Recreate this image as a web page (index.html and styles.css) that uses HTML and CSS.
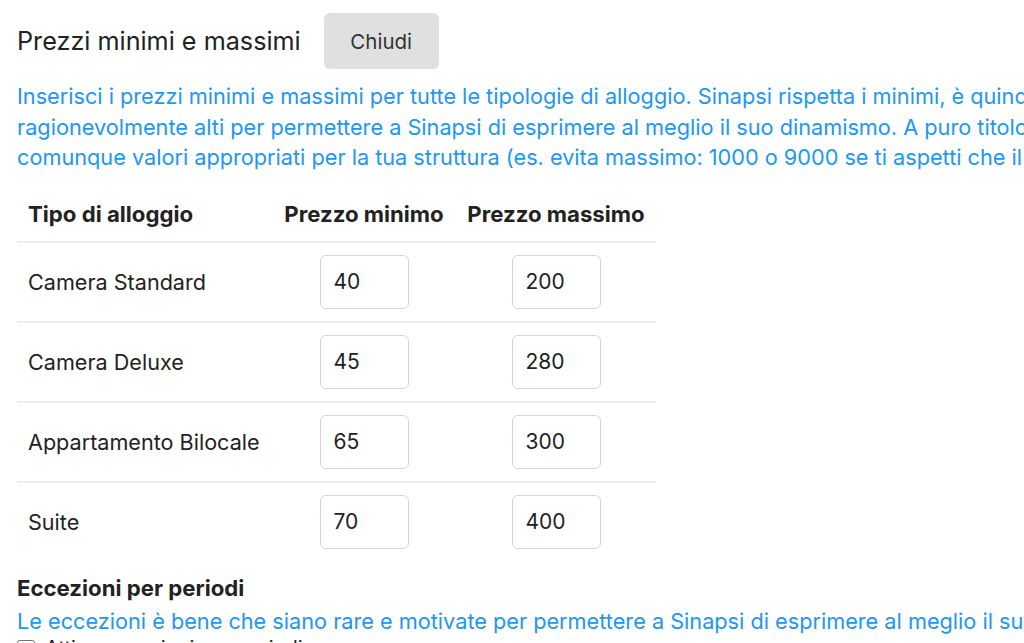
FILE: index.html
```html
<!DOCTYPE html>
<html lang="it">
<head>
<meta charset="utf-8">
<title>Prezzi minimi e massimi</title>
<link rel="stylesheet" href="styles.css">
</head>
<body>
<div class="page">
  <div class="header">
    <h2 class="title">Prezzi minimi e massimi</h2>
    <button class="btn" type="button">Chiudi</button>
  </div>
  <p class="info">Inserisci i prezzi minimi e massimi per tutte le tipologie di alloggio. Sinapsi rispetta i minimi, è quindi importante che siano<br>ragionevolmente alti per permettere a Sinapsi di esprimere al meglio il suo dinamismo. A puro titolo indicativo, inserisci<br>comunque valori appropriati per la tua struttura (es. evita massimo: 1000 o 9000 se ti aspetti che il prezzo non superi mai 400).</p>
  <table class="prices">
    <thead>
      <tr>
        <th class="c-type">Tipo di alloggio</th>
        <th class="c-min">Prezzo minimo</th>
        <th class="c-max">Prezzo massimo</th>
      </tr>
    </thead>
    <tbody>
      <tr>
        <td class="c-type">Camera Standard</td>
        <td class="c-min"><input class="num" type="text" value="40"></td>
        <td class="c-max"><input class="num" type="text" value="200"></td>
      </tr>
      <tr>
        <td class="c-type">Camera Deluxe</td>
        <td class="c-min"><input class="num" type="text" value="45"></td>
        <td class="c-max"><input class="num" type="text" value="280"></td>
      </tr>
      <tr>
        <td class="c-type">Appartamento Bilocale</td>
        <td class="c-min"><input class="num" type="text" value="65"></td>
        <td class="c-max"><input class="num" type="text" value="300"></td>
      </tr>
      <tr>
        <td class="c-type">Suite</td>
        <td class="c-min"><input class="num" type="text" value="70"></td>
        <td class="c-max"><input class="num" type="text" value="400"></td>
      </tr>
    </tbody>
  </table>
  <h3 class="subtitle">Eccezioni per periodi</h3>
  <p class="info info-tight">Le eccezioni è bene che siano rare e motivate per permettere a Sinapsi di esprimere al meglio il suo dinamismo.</p>
  <label class="check"><input type="checkbox"> Attiva eccezioni per periodi</label>
</div>
</body>
</html>
```
FILE: styles.css
```css
html, body {
  margin: 0;
  padding: 0;
  background: #fff;
  overflow: hidden;
}
body {
  font-family: "Inter", "Liberation Sans", sans-serif;
  color: #222;
}
.page {
  width: 1500px;
  padding: 13px 17px 0;
}
.header {
  display: flex;
  align-items: center;
  gap: 23px;
}
.title {
  margin: 0;
  font-size: 25.2px;
  font-weight: 400;
  color: #222;
}
.btn {
  width: 115px;
  height: 56px;
  border: none;
  border-radius: 6px;
  background: #e0e0e0;
  color: #333;
  font-family: inherit;
  font-size: 20.5px;
}
.info {
  margin: 12px 0 0;
  font-size: 21.7px;
  line-height: 30.5px;
  color: #2196f3;
  white-space: nowrap;
}
.info-tight {
  margin-top: 3px;
}
.prices {
  border-collapse: collapse;
  margin-top: 14px;
  font-size: 21.6px;
}
.prices th {
  height: 54px;
  padding: 0 11px;
  font-size: 22.2px;
  font-weight: 700;
  text-align: center;
  border-bottom: 2px solid #eee;
}
.prices th.c-type {
  text-align: left;
}
.prices td {
  height: 78px;
  padding: 0 11px;
  text-align: center;
  border-bottom: 2px solid #eee;
}
.prices tbody tr:last-child td {
  border-bottom: none;
}
.prices td.c-type {
  text-align: left;
}
.c-type { width: 233px; }
.c-min { width: 162px; }
.c-max { width: 178px; }
.num {
  box-sizing: border-box;
  width: 89px;
  height: 54px;
  border: 1.5px solid #d4d4d4;
  border-radius: 6px;
  padding: 0 13px;
  font-family: inherit;
  font-size: 21px;
  color: #222;
  vertical-align: middle;
}
.subtitle {
  margin: 12px 0 0;
  font-size: 22.2px;
  font-weight: 700;
  line-height: 30px;
}
.check {
  display: flex;
  align-items: center;
  gap: 10px;
  font-size: 20px;
  color: #222;
}
.check input {
  width: 18px;
  height: 18px;
  margin: 2px 0 0;
}
```
